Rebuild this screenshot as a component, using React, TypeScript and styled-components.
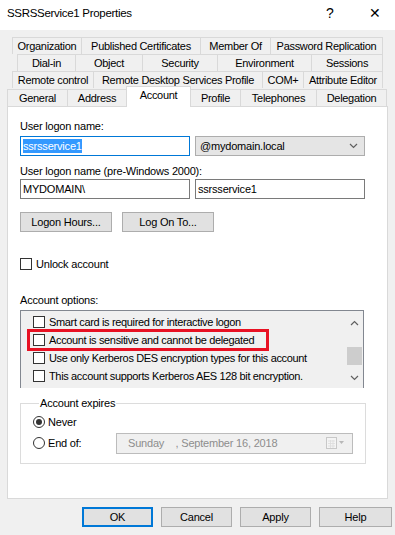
import React from "react";
import styled, { createGlobalStyle, css } from "styled-components";

const GlobalStyle = createGlobalStyle`
  html, body {
    margin: 0;
    padding: 0;
    background: #f0f0f0;
  }
  body {
    font-family: "Liberation Sans", Arial, sans-serif;
    font-size: 11px;
    color: #000;
  }
`;

const Window = styled.div`
  width: 395px;
  height: 535px;
  display: flex;
  flex-direction: column;
  background: #f0f0f0;
  overflow: hidden;
`;

const TitleBar = styled.div`
  height: 30px;
  flex: none;
  display: flex;
  align-items: center;
  background: #fff;
  padding-left: 7px;
  padding-bottom: 4px;
  box-sizing: border-box;
`;

const Title = styled.div`
  flex: 1;
  font-size: 11.5px;
  letter-spacing: -0.3px;
`;

const TitleButton = styled.div<{ $w: number }>`
  width: ${(p) => p.$w}px;
  text-align: center;
  font-size: 14px;
`;

const Tabs = styled.div`
  margin-top: 7px;
  display: flex;
  flex-direction: column;
`;

const TabRow = styled.div<{ $indent: number }>`
  display: flex;
  height: 17px;
  padding-left: ${(p) => p.$indent}px;
  align-items: flex-end;
`;

const Tab = styled.div<{ $w: number; $active?: boolean }>`
  width: ${(p) => p.$w}px;
  height: 17px;
  box-sizing: border-box;
  border: 1px solid #d9d9d9;
  border-bottom: none;
  margin-left: -1px;
  display: flex;
  align-items: center;
  justify-content: center;
  white-space: nowrap;
  letter-spacing: -0.3px;
  background: #f0f0f0;
  ${(p) =>
    p.$active &&
    css`
      height: 21px;
      background: #fff;
      position: relative;
      z-index: 1;
      margin-bottom: -1px;
      padding-bottom: 4px;
    `}
`;

const LastRow = styled(TabRow)`
  height: 18px;
`;

const Panel = styled.div`
  margin-left: 7px;
  width: 381px;
  height: 393px;
  box-sizing: border-box;
  background: #fff;
  border: 1px solid #d9d9d9;
  padding: 12px 0 0 12px;
  display: flex;
  flex-direction: column;
`;

const Label = styled.div<{ $mt?: number }>`
  height: 14px;
  line-height: 14px;
  margin-top: ${(p) => p.$mt ?? 0}px;
  letter-spacing: -0.2px;
`;

const FieldRow = styled.div<{ $mt?: number }>`
  display: flex;
  gap: 5px;
  margin-top: ${(p) => p.$mt ?? 0}px;
`;

const Input = styled.div<{ $focus?: boolean }>`
  width: 170px;
  height: 20px;
  box-sizing: border-box;
  border: 1px solid ${(p) => (p.$focus ? "#0078d7" : "#7a7a7a")};
  background: #fff;
  display: flex;
  align-items: center;
  padding-left: 2px;
  letter-spacing: -0.2px;
`;

const Selected = styled.span`
  background: #3399ff;
  color: #fff;
  padding: 1px 0;
`;

const Select = styled.div`
  width: 170px;
  height: 20px;
  box-sizing: border-box;
  border: 1px solid #adadad;
  background: #e5e5e5;
  display: flex;
  align-items: center;
  padding: 0 6px 0 4px;
  justify-content: space-between;
  letter-spacing: -0.2px;
`;

const ButtonRow = styled.div<{ $mt?: number; $end?: boolean }>`
  display: flex;
  gap: 10px;
  margin-top: ${(p) => p.$mt ?? 0}px;
  ${(p) =>
    p.$end &&
    css`
      gap: 8px;
      justify-content: flex-end;
      padding-right: 3px;
    `}
`;

const Button = styled.div<{ $w: number; $default?: boolean }>`
  width: ${(p) => p.$w}px;
  height: 20px;
  box-sizing: border-box;
  border: 1px solid ${(p) => (p.$default ? "#0078d7" : "#adadad")};
  background: #e1e1e1;
  display: flex;
  align-items: center;
  justify-content: center;
  letter-spacing: -0.2px;
  ${(p) =>
    p.$default &&
    css`
      box-shadow: inset 0 0 0 1px #0078d7;
    `}
`;

const CheckRow = styled.div<{ $mt?: number }>`
  display: flex;
  flex: none;
  align-items: center;
  gap: 4px;
  height: 14px;
  margin-top: ${(p) => p.$mt ?? 0}px;
  letter-spacing: -0.2px;
  white-space: nowrap;
`;

const Box = styled.div`
  width: 12px;
  height: 12px;
  box-sizing: border-box;
  border: 1px solid #333;
  background: #fff;
  flex: none;
`;

const ListBox = styled.div`
  margin-top: 3px;
  width: 344px;
  height: 78px;
  box-sizing: border-box;
  border: 1px solid #828790;
  border-bottom: none;
  background: #f0f0f0;
  display: flex;
  overflow: hidden;
`;

const ListItems = styled.div`
  flex: 1;
  padding: 4px 0 0 12px;
  display: flex;
  flex-direction: column;
  gap: 4px;
`;

const ListItem = styled(CheckRow)<{ $marked?: boolean }>`
  letter-spacing: -0.35px;
  ${(p) =>
    p.$marked &&
    css`
      outline: 3px solid #e81123;
      outline-offset: 1px;
      margin-left: -2px;
      padding-left: 2px;
      width: 232px;
    `}
`;

const ScrollBar = styled.div`
  width: 17px;
  display: flex;
  flex-direction: column;
  align-items: center;
  padding-top: 9px;
`;

const Thumb = styled.div`
  width: 15px;
  height: 18px;
  margin: 21px 0 10px;
  background: #cdcdcd;
`;

const Group = styled.fieldset`
  margin: 8px 0 0;
  width: 346px;
  height: 68px;
  box-sizing: border-box;
  border: 1px solid #dcdcdc;
  padding: 5px 0 0 12px;
  display: flex;
  flex-direction: column;
  gap: 7px;
`;

const Legend = styled.legend`
  padding: 0 1px;
  margin-left: 6px;
  letter-spacing: -0.2px;
  line-height: 14px;
`;

const RadioRow = styled.div`
  display: flex;
  align-items: center;
  gap: 3px;
  letter-spacing: -0.2px;
  height: 14px;
`;

const Radio = styled.div<{ $on?: boolean }>`
  width: 12px;
  height: 12px;
  box-sizing: border-box;
  border-radius: 50%;
  border: 1px solid #333;
  background: #fff;
  display: flex;
  align-items: center;
  justify-content: center;
  &::after {
    content: "";
    width: 6px;
    height: 6px;
    border-radius: 50%;
    background: ${(p) => (p.$on ? "#333" : "transparent")};
  }
`;

const RadioText = styled.span`
  width: 65px;
`;

const DatePicker = styled.div`
  width: 237px;
  height: 21px;
  box-sizing: border-box;
  border: 1px solid #bcbcbc;
  background: #f0f0f0;
  color: #8d8d8d;
  display: flex;
  align-items: center;
  padding: 0 6px 0 11px;
  letter-spacing: -0.2px;
  white-space: pre;
`;

const Spacer = styled.div`
  flex: 1;
`;

function Chevron({ up }: { up?: boolean }) {
  return (
    <svg width="9" height="6" viewBox="0 0 9 6">
      <path
        d={up ? "M1 5 L4.5 1.5 L8 5" : "M1 1 L4.5 4.5 L8 1"}
        fill="none"
        stroke="#606060"
        strokeWidth="1.2"
      />
    </svg>
  );
}

function CalendarIcon() {
  return (
    <svg width="20" height="12" viewBox="0 0 20 12">
      <rect x="0.5" y="0.5" width="10" height="11" fill="#f4f4f4" stroke="#c8c8c8" />
      <path d="M2 4 H9 M2 6.5 H9 M2 9 H9 M4.5 3 V11 M7 3 V11" stroke="#dcdcdc" strokeWidth="0.8" />
      <path d="M13 4 H18 L15.5 7 Z" fill="#b8b8b8" />
    </svg>
  );
}

const tabRows: { indent: number; tabs: [string, number][] }[] = [
  { indent: 13, tabs: [["Organization", 70], ["Published Certificates", 120], ["Member Of", 71], ["Password Replication", 113]] },
  { indent: 18, tabs: [["Dial-in", 59], ["Object", 68], ["Security", 76], ["Environment", 95], ["Sessions", 72]] },
  { indent: 13, tabs: [["Remote control", 82], ["Remote Desktop Services Profile", 170], ["COM+", 42], ["Attribute Editor", 80]] },
];

const lastTabs: [string, number][] = [
  ["General", 61],
  ["Address", 60],
  ["Account", 65],
  ["Profile", 51],
  ["Telephones", 77],
  ["Delegation", 71],
];

const options = [
  "Smart card is required for interactive logon",
  "Account is sensitive and cannot be delegated",
  "Use only Kerberos DES encryption types for this account",
  "This account supports Kerberos AES 128 bit encryption.",
];

export default function App() {
  return (
    <Window>
      <GlobalStyle />
      <TitleBar>
        <Title>SSRSService1 Properties</Title>
        <TitleButton $w={50}>?</TitleButton>
        <TitleButton $w={40}>✕</TitleButton>
      </TitleBar>

      <Tabs>
        {tabRows.map((row, i) => (
          <TabRow key={i} $indent={row.indent}>
            {row.tabs.map(([name, w]) => (
              <Tab key={name} $w={w}>
                {name}
              </Tab>
            ))}
          </TabRow>
        ))}
        <LastRow $indent={8}>
          {lastTabs.map(([name, w]) => (
            <Tab key={name} $w={w} $active={name === "Account"}>
              {name}
            </Tab>
          ))}
        </LastRow>
      </Tabs>

      <Panel>
        <Label>User logon name:</Label>
        <FieldRow $mt={3}>
          <Input $focus>
            <Selected>ssrsservice1</Selected>
          </Input>
          <Select>
            <span>@mydomain.local</span>
            <Chevron />
          </Select>
        </FieldRow>

        <Label $mt={8}>User logon name (pre-Windows 2000):</Label>
        <FieldRow $mt={1}>
          <Input>MYDOMAIN\</Input>
          <Input>ssrsservice1</Input>
        </FieldRow>

        <ButtonRow $mt={13}>
          <Button $w={92}>Logon Hours...</Button>
          <Button $w={92}>Log On To...</Button>
        </ButtonRow>

        <CheckRow $mt={25}>
          <Box />
          Unlock account
        </CheckRow>

        <Label $mt={22}>Account options:</Label>
        <ListBox>
          <ListItems>
            {options.map((text, i) => (
              <ListItem key={text} $marked={i === 1}>
                <Box />
                {text}
              </ListItem>
            ))}
            <ListItem>
              <Box />
            </ListItem>
          </ListItems>
          <ScrollBar>
            <Chevron up />
            <Thumb />
            <Chevron />
          </ScrollBar>
        </ListBox>

        <Group>
          <Legend>Account expires</Legend>
          <RadioRow>
            <Radio $on />
            <RadioText>Never</RadioText>
          </RadioRow>
          <RadioRow>
            <Radio />
            <RadioText>End of:</RadioText>
            <DatePicker>
              {"Sunday    , September 16, 2018"}
              <Spacer />
              <CalendarIcon />
            </DatePicker>
          </RadioRow>
        </Group>
      </Panel>

      <ButtonRow $mt={8} $end>
        <Button $w={71} $default>OK</Button>
        <Button $w={71}>Cancel</Button>
        <Button $w={71}>Apply</Button>
        <Button $w={73}>Help</Button>
      </ButtonRow>
    </Window>
  );
}
